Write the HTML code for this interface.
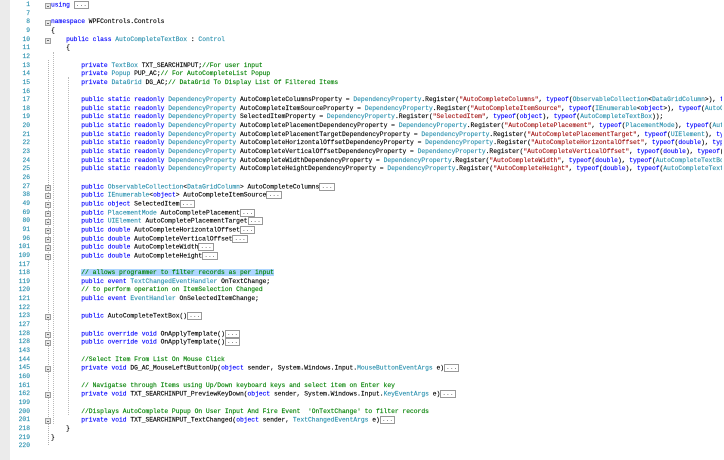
<!DOCTYPE html>
<html><head><meta charset="utf-8"><style>
html,body{margin:0;padding:0;background:#fff;width:724px;height:460px;overflow:hidden}
.bar{position:absolute;left:0;top:0;width:10px;height:460px;background:#ebebeb}
.g1{position:absolute;left:48px;top:60px;width:0;height:385px;border-left:1px dotted #b0b0b0}
.g2{position:absolute;left:53px;top:52px;width:0;height:372px;border-left:1px dotted #bbb}
.g3{position:absolute;left:68px;top:77px;width:0;height:338px;border-left:1px dotted #bbb}
.ln{position:absolute;left:0;height:8.65px;line-height:8.65px;width:724px;font-family:"Liberation Mono",monospace;font-size:6.3px;white-space:pre;color:#000;-webkit-text-stroke:0.15px currentColor}
.n{position:absolute;left:0;width:30px;text-align:right;color:#2b91af}
.m{position:absolute;left:45px;top:2px;width:4px;height:4px;border:1px solid #a0a0a0;background:#e8e8e8}
.m:after{content:"";position:absolute;left:1px;top:1.5px;width:2px;height:1px;background:#666}
.code{position:absolute;left:51px;top:0;overflow:hidden;width:671px}
.k{color:#0000ff}.t{color:#2b91af}.s{color:#a31515}.c{color:#008000}
.b{display:inline-block;border:1px solid #999;height:6px;line-height:5px;padding:0 1px;color:#666;vertical-align:middle;-webkit-text-stroke:0}
.hl{background:#add6ff}
</style></head><body>
<div class="bar"></div>
<div class="g1"></div><div class="g2"></div><div class="g3"></div>
<div id="c"></div>
<script>
var L=[
["1","p","<span class=k>using</span> <span class=b>...</span>"],
["7","",""],
["8","m","<span class=k>namespace</span> WPFControls.Controls"],
["9","","{"],
["10","m","    <span class=k>public</span> <span class=k>class</span> <span class=t>AutoCompleteTextBox</span> : <span class=t>Control</span>"],
["11","","    {"],
["12","",""],
["13","","        <span class=k>private</span> <span class=t>TextBox</span> TXT_SEARCHINPUT;<span class=c>//For user input</span>"],
["14","","        <span class=k>private</span> <span class=t>Popup</span> PUP_AC;<span class=c>// For AutoCompleteList Popup</span>"],
["15","","        <span class=k>private</span> <span class=t>DataGrid</span> DG_AC;<span class=c>// DataGrid To Display List Of Filtered Items</span>"],
["16","",""]];
var P="        <span class=k>public</span> <span class=k>static</span> <span class=k>readonly</span> <span class=t>DependencyProperty</span> ";
function R(n,a,s,t){return P+a+" = <span class=t>DependencyProperty</span>.Register(<span class=s>\""+s+"\"</span>, <span class=k>typeof</span>("+t+"), <span class=k>typeof</span>(<span class=t>AutoCompleteTextBox</span>));";}
var rs=[["17","AutoCompleteColumnsProperty","AutoCompleteColumns","<span class=t>ObservableCollection</span>&lt;<span class=t>DataGridColumn</span>&gt;"],
["18","AutoCompleteItemSourceProperty","AutoCompleteItemSource","<span class=t>IEnumerable</span>&lt;<span class=k>object</span>&gt;"],
["19","SelectedItemProperty","SelectedItem","<span class=k>object</span>"],
["20","AutoCompletePlacementDependencyProperty","AutoCompletePlacement","<span class=t>PlacementMode</span>"],
["21","AutoCompletePlacementTargetDependencyProperty","AutoCompletePlacementTarget","<span class=t>UIElement</span>"],
["22","AutoCompleteHorizontalOffsetDependencyProperty","AutoCompleteHorizontalOffset","<span class=k>double</span>"],
["23","AutoCompleteVerticalOffsetDependencyProperty","AutoCompleteVerticalOffset","<span class=k>double</span>"],
["24","AutoCompleteWidthDependencyProperty","AutoCompleteWidth","<span class=k>double</span>"],
["25","AutoCompleteHeightDependencyProperty","AutoCompleteHeight","<span class=k>double</span>"]];
rs.forEach(function(r){L.push([r[0],"",R(r[0],r[1],r[2],r[3])]);});
var pb="        <span class=k>public</span> ";
var B="<span class=b>...</span>";
L=L.concat([
["26","",""],
["27","p",pb+"<span class=t>ObservableCollection</span>&lt;<span class=t>DataGridColumn</span>&gt; AutoCompleteColumns"+B],
["38","p",pb+"<span class=t>IEnumerable</span>&lt;<span class=k>object</span>&gt; AutoCompleteItemSource"+B],
["49","p",pb+"<span class=k>object</span> SelectedItem"+B],
["69","p",pb+"<span class=t>PlacementMode</span> AutoCompletePlacement"+B],
["80","p",pb+"<span class=t>UIElement</span> AutoCompletePlacementTarget"+B],
["91","p",pb+"<span class=k>double</span> AutoCompleteHorizontalOffset"+B],
["96","p",pb+"<span class=k>double</span> AutoCompleteVerticalOffset"+B],
["101","p",pb+"<span class=k>double</span> AutoCompleteWidth"+B],
["109","p",pb+"<span class=k>double</span> AutoCompleteHeight"+B],
["117","",""],
["118","","        <span class='c hl'>// allows programmer to filter records as per input</span>"],
["119","",pb+"<span class=k>event</span> <span class=t>TextChangedEventHandler</span> OnTextChange;"],
["120","","        <span class=c>// to perform operation on ItemSelection Changed</span>"],
["121","",pb+"<span class=k>event</span> <span class=t>EventHandler</span> OnSelectedItemChange;"],
["122","",""],
["123","p",pb+"AutoCompleteTextBox()"+B],
["127","",""],
["128","p",pb+"<span class=k>override</span> <span class=k>void</span> OnApplyTemplate()"+B],
["128","p",pb+"<span class=k>override</span> <span class=k>void</span> OnApplyTemplate()"+B],
["143","",""],
["144","","        <span class=c>//Select Item From List On Mouse Click</span>"],
["145","p","        <span class=k>private</span> <span class=k>void</span> DG_AC_MouseLeftButtonUp(<span class=k>object</span> sender, System.Windows.Input.<span class=t>MouseButtonEventArgs</span> e)"+B],
["160","",""],
["161","","        <span class=c>// Navigatse through Items using Up/Down keyboard keys and select item on Enter key</span>"],
["162","p","        <span class=k>private</span> <span class=k>void</span> TXT_SEARCHINPUT_PreviewKeyDown(<span class=k>object</span> sender, System.Windows.Input.<span class=t>KeyEventArgs</span> e)"+B],
["199","",""],
["200","","        <span class=c>//Displays AutoComplete Pupup On User Input And Fire Event  'OnTextChange' to filter records</span>"],
["201","p","        <span class=k>private</span> <span class=k>void</span> TXT_SEARCHINPUT_TextChanged(<span class=k>object</span> sender, <span class=t>TextChangedEventArgs</span> e)"+B],
["218","","    }"],
["219","","}"],
["220","",""]]);
var h="";
L.forEach(function(l,i){
 var top=1+i*8.65;
 var mk=l[1]?"<div class=m></div>":"";
 h+="<div class=ln style='top:"+top.toFixed(2)+"px'><span class=n>"+l[0]+"</span>"+mk+"<span class=code>"+l[2]+"</span></div>";
});
document.getElementById("c").innerHTML=h;
</script>
</body></html>
